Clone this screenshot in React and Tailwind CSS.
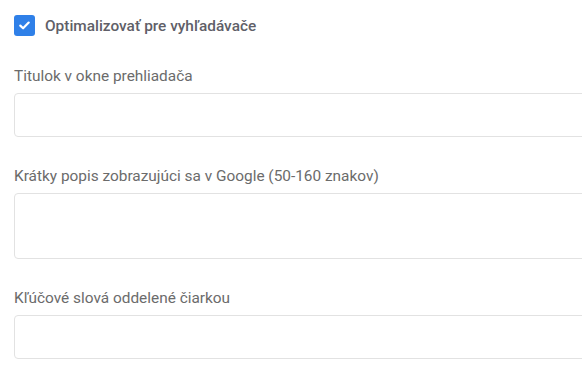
export default function App() {
  const font = { fontFamily: "Roboto, 'Noto Sans', sans-serif" };
  return (
    <div className="w-full overflow-hidden bg-white" style={font}>
      <div className="pl-[14px] pt-[15px] pb-[20px]">
        <label className="flex items-center gap-[10px] h-[21px]">
          <span className="flex h-[21px] w-[21px] items-center justify-center rounded-[3px] bg-[#2f80e8]">
            <svg width="11" height="9" viewBox="0 0 11 9" fill="none">
              <path d="M1.3 4.6 L4.1 7.3 L9.7 1.6" stroke="white" strokeWidth="2.2" strokeLinecap="round" strokeLinejoin="round" />
            </svg>
          </span>
          <span className="text-[15.4px] font-medium leading-[20px] text-[#5f5f68]">Optimalizovať pre vyhľadávače</span>
        </label>

        <div className="mt-[30px] flex flex-col">
          <span className="text-[15.4px] leading-[20px] text-[#6b6b6b]">Titulok v okne prehliadača</span>
          <div className="mt-[7px] h-[44px] w-[600px] rounded-[4px] border border-[#e2e2e2] bg-white"></div>
        </div>

        <div className="mt-[29px] flex flex-col">
          <span className="text-[15.4px] leading-[20px] text-[#6b6b6b]">Krátky popis zobrazujúci sa v Google (50-160 znakov)</span>
          <div className="mt-[7px] h-[66px] w-[600px] rounded-[4px] border border-[#e2e2e2] bg-white"></div>
        </div>

        <div className="mt-[29px] flex flex-col">
          <span className="text-[15.4px] leading-[20px] text-[#6b6b6b]">Kľúčové slová oddelené čiarkou</span>
          <div className="mt-[7px] h-[44px] w-[600px] rounded-[4px] border border-[#e2e2e2] bg-white"></div>
        </div>
      </div>
    </div>
  );
}
